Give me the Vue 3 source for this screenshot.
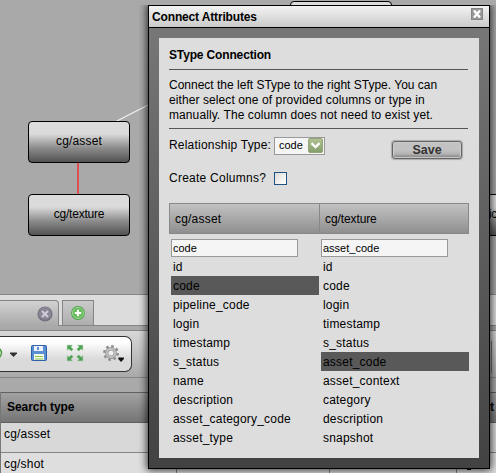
<script setup>
const description = [
  { text: 'Connect the left SType to the right SType. You can', cls: 'd1' },
  { text: 'either select one of provided columns or type in', cls: 'd2' },
  { text: 'manually. The column does not need to exist yet.', cls: 'd3' },
]
const columns = [
  {
    type: 'cg/asset',
    value: 'code',
    selected: 'code',
    items: ['id', 'code', 'pipeline_code', 'login', 'timestamp', 's_status', 'name', 'description', 'asset_category_code', 'asset_type'],
  },
  {
    type: 'cg/texture',
    value: 'asset_code',
    selected: 'asset_code',
    items: ['id', 'code', 'login', 'timestamp', 's_status', 'asset_code', 'asset_context', 'category', 'description', 'snapshot'],
  },
]
</script>

<template>
  <div class="screen">
    <section class="canvas">
      <svg class="links" width="496" height="294">
        <path d="M116 121.5L148 105" stroke="#f0f0f0" stroke-width="1.4" />
        <path d="M78 163V194" stroke="#dc5050" stroke-width="2" />
      </svg>
      <div class="node asset">cg/asset</div>
      <div class="node texture">cg/texture</div>
      <div class="node upper"></div>
      <div class="node side">ic</div>
    </section>

    <nav class="tabs">
      <div class="tab active">
        <svg width="16" height="16" viewBox="0 0 16 16">
          <circle cx="8" cy="8" r="7.6" fill="#77727f" />
          <circle cx="8" cy="7.4" r="6.3" fill="#8b8695" />
          <path d="M5 5l6 6M11 5l-6 6" stroke="#cfccd8" stroke-width="2.1" />
        </svg>
      </div>
      <div class="tab add">
        <svg width="14" height="14" viewBox="0 0 14 14">
          <circle cx="7" cy="7" r="6.9" fill="#4ba447" />
          <circle cx="7" cy="7" r="5.6" fill="#68bd5e" stroke="#b9e3b2" stroke-width=".7" />
          <path d="M7 3.8v6.4M3.8 7h6.4" stroke="#fff" stroke-width="2" />
        </svg>
      </div>
    </nav>
    <div class="strip"></div>

    <section class="toolbar">
      <div class="pill">
        <svg width="131" height="34" viewBox="0 0 131 34">
          <circle cx="-4" cy="16" r="5.4" fill="#fff" stroke="#4f9e43" stroke-width="1.6" />
          <path d="M10 15.5h7v1L13.5 20 10 16.5z" fill="#333" />
          <g>
            <rect x="31.5" y="8.5" width="15" height="15" rx="1" fill="#5b8fd4" stroke="#2f5fa8" />
            <path d="M34 9h9v5h-9z" fill="#eef4fd" />
            <path d="M37 10h2v3h-2z" fill="#5b8fd4" />
            <path d="M34 17h10v6H34z" fill="#f4faec" />
            <path d="M35 19.5h8M35 22h8" stroke="#8bc34a" stroke-width="1.2" />
          </g>
          <g fill="#4ca052" stroke="#79b878" stroke-width=".5">
            <path d="M67.3 8.3h5l-1.6 1.6 2.4 2.4-1.8 1.8-2.4-2.4-1.6 1.6z" />
            <path d="M82.7 8.3h-5l1.6 1.6-2.4 2.4 1.8 1.8 2.4-2.4 1.6 1.6z" />
            <path d="M67.3 23.7h5l-1.6-1.6 2.4-2.4-1.8-1.8-2.4 2.4-1.6-1.6z" />
            <path d="M82.7 23.7h-5l1.6-1.6-2.4-2.4 1.8-1.8 2.4 2.4 1.6-1.6z" />
          </g>
          <circle cx="111" cy="16" r="6.6" fill="none" stroke="#8d8d8d" stroke-width="2.6" stroke-dasharray="2.6 2.58" />
          <circle cx="111" cy="16" r="4.2" fill="#eee" stroke="#999" stroke-width="3.4" />
          <circle cx="111" cy="16" r="4.2" fill="none" stroke="#c4c4c4" stroke-width="1.8" />
          <path d="M118.3 20.5h5.6v1.5L121 25l-2.7-3z" fill="#111" />
        </svg>
      </div>
      <div class="shelf"></div>
    </section>

    <div class="gap"></div>
    <section class="table">
      <div class="thead"><b>Search type</b><b class="last">t</b></div>
      <div class="trow first"><span>cg/asset</span></div>
      <div class="trow second"><span>cg/shot</span><i class="v1"></i><i class="v2"></i><i class="v3"></i><i class="mark"></i></div>
    </section>

    <div class="popup">
      <header>
        <b>Connect Attributes</b>
        <svg width="12" height="12" viewBox="0 0 12 12">
          <rect x=".5" y=".5" width="11" height="11" fill="#999" stroke="#858585" />
          <path d="M3 2.5L9 9.5M9 2.5L3 9.5" stroke="#fff" stroke-width="2.4" />
        </svg>
      </header>
      <div class="body">
        <main class="panel">
          <h1><span>SType Connection</span></h1>
          <div class="desc">
            <p v-for="line in description" :key="line.cls" :class="line.cls">{{ line.text }}</p>
          </div>
          <div class="options">
            <div class="fields">
              <div class="field relation">
                <label>Relationship Type:</label>
                <div class="select">
                  <span>code</span>
                  <svg width="15" height="15" viewBox="0 0 15 15">
                    <defs>
                      <linearGradient id="arrow" x2="0" y2="1">
                        <stop offset="0" stop-color="#b3c294" />
                        <stop offset="1" stop-color="#839e68" />
                      </linearGradient>
                    </defs>
                    <rect x=".5" y=".5" width="14" height="14" rx="1.5" fill="url(#arrow)" stroke="#91a777" />
                    <path d="M3.5 5.2L7.5 9l4-3.8" fill="none" stroke="#fff" stroke-width="2.4" />
                  </svg>
                </div>
              </div>
              <div class="field create">
                <label>Create Columns?</label>
                <div class="check"></div>
              </div>
            </div>
            <div class="save">Save</div>
          </div>
          <div class="heads">
            <div v-for="c in columns" :key="c.type"><span>{{ c.type }}</span></div>
          </div>
          <div class="lists">
            <div v-for="c in columns" :key="c.type" class="list">
              <div class="input">{{ c.value }}</div>
              <div v-for="item in c.items" :key="item" class="item" :class="{ on: item === c.selected }">{{ item }}</div>
            </div>
          </div>
        </main>
      </div>
    </div>
  </div>
</template>

<style>
body { margin: 0; overflow: hidden; }
</style>

<style scoped>
* { box-sizing: border-box; }
.screen {
  position: relative; width: 496px; height: 473px; overflow: hidden;
  background: #a9a9a9; color: #000;
  font: 12px/15px "Liberation Sans", Arial, sans-serif;
  display: flex; flex-direction: column;
}
.canvas { position: relative; height: 294px; flex: none; }
.links { position: absolute; left: 0; top: 0; }
.node {
  position: absolute; width: 102px; height: 42px; border: 1px solid #000; border-radius: 4px;
  background: linear-gradient(#dcdcdc 0%, #dadada 30%, #8c8c8c 65%, #525252 100%);
  text-align: center; line-height: 38px; letter-spacing: .15px;
}
.asset { left: 28px; top: 121px; }
.texture { left: 28px; top: 194px; letter-spacing: -.2px; }
.upper { left: 290px; top: 1px; }
.side { left: 442px; top: 194px; letter-spacing: -.4px; }

.tabs {
  height: 32px; flex: none; display: flex; align-items: flex-end; gap: 3px;
  background: #dcdcdc; border-top: 1px solid #858585; border-bottom: 1px solid #858585;
}
.tab { height: 25px; border: 1px solid #858585; border-bottom: 0; display: flex; align-items: center; }
.active {
  width: 59px; height: 26px; margin-bottom: -1px; justify-content: flex-end; padding-right: 5px;
  border-left: 0; border-top-right-radius: 4px; background: linear-gradient(#d2d2d2, #a9a9a9);
}
.add { width: 32px; justify-content: center; background: linear-gradient(#cacaca, #aeaeae); }
.strip { height: 4px; flex: none; }
.toolbar {
  height: 48px; flex: none; display: flex; justify-content: space-between; align-items: flex-start;
  border-top: 1px solid #858585; border-bottom: 1px solid #858585;
  background: linear-gradient(#d8d8d8, #a9a9a9); padding-top: 5px;
}
.pill {
  width: 132px; height: 36px; border: 1px solid #333; border-left: 0; border-radius: 0 7px 7px 0;
  background: linear-gradient(#fff 15%, #dadada 65%); overflow: hidden;
}
.pill svg { display: block; }
.shelf { width: 5px; height: 32px; margin-top: 5px; border-left: 1px solid #777; }
.gap { height: 14px; flex: none; }
.table { flex: none; border-left: 1px solid #777; }
.thead {
  height: 31px; display: flex; justify-content: space-between; align-items: center; padding: 0 2px 0 6px;
  border-top: 1px solid #606060; border-bottom: 1px solid #606060;
  background: linear-gradient(#a2a2a2, #757575);
}
.thead b { letter-spacing: -.05px; }
.trow { position: relative; padding: 4px 3px; height: 30px; background: #d8d8d8; border-bottom: 1px solid #858585; letter-spacing: .2px; }
.second { background: #dedede; }
.trow i { position: absolute; top: 0; width: 1px; height: 30px; background: #858585; }
.v1 { left: 175px; } .v2 { left: 328px; } .v3 { left: 455px; }
.trow .mark { left: 466px; top: 15px; width: 4px; height: 2px; background: #000; }

.popup {
  position: absolute; left: 148px; top: 5px; width: 342px; height: 464px;
  border: 1px solid #000; background: #555; box-shadow: 0 0 8px 1px rgba(0, 0, 0, .8);
  display: flex; flex-direction: column; clip-path: inset(0 -12px -12px -10px);
}
header {
  height: 22px; flex: none; border-bottom: 1px solid #000; background: linear-gradient(#f3f3f3, #cacaca);
  display: flex; justify-content: space-between; padding: 2px 6px 0 3px;
}
header b { line-height: 18px; letter-spacing: -.15px; }
.body { flex: 1; padding: 10px; background: linear-gradient(#777, #424242); }
.panel { width: 320px; height: 420px; padding: 10px 10px 0; background: #ddd; }
h1 { margin: 0; height: 22px; width: 299px; border-bottom: 1px solid #555; font: bold 12px/15px "Liberation Sans", Arial, sans-serif; letter-spacing: -.15px; }
.desc { width: 299px; height: 59px; padding-top: 8px; border-bottom: 1px solid #555; white-space: nowrap; }
.desc p { margin: 0; }
.d1 { letter-spacing: 0; }
.d2 { letter-spacing: .09px; }
.d3 { letter-spacing: .09px; }
.options { height: 74px; display: flex; justify-content: space-between; padding: 7px 7px 0 0; }
.fields { display: flex; flex-direction: column; gap: 14px; }
.field { display: flex; height: 19px; align-items: center; }
.field label { width: 105px; white-space: nowrap; letter-spacing: .2px; }
.create label { letter-spacing: .25px; }
.select { width: 51px; height: 18px; border: 1px solid #999; background: #f5f5f5; display: flex; align-items: center; justify-content: space-between; padding: 0 1px 0 4px; font-size: 11px; }
.check { width: 13px; height: 13px; border: 1px solid #1d5281; background: linear-gradient(135deg, #dcdcd7, #fff); }
.save {
  width: 70px; height: 18px; margin-top: 5px; border: 1px solid #666; border-radius: 3px;
  background: linear-gradient(#c2c2c2 50%, #b3b3b3 75%, #777); box-shadow: 0 0 1px 1px #aaa, inset 0 0 1px 1px #ccc;
  text-align: center; font-weight: bold; font-size: 12.5px; line-height: 17px; color: #333;
}
.heads { display: flex; width: 300px; height: 31px; border: 1px solid #888; background: linear-gradient(#c2c2c2, #8f8f8f); letter-spacing: .2px; }
.heads div { width: 150px; padding-left: 5px; line-height: 30px; }
.heads div + div { border-left: 1px solid #888; letter-spacing: -.1px; }
.lists { display: flex; gap: 2px; padding: 5px 0 0 2px; }
.list { width: 148px; }
.input { width: 127px; height: 18px; border: 1px solid #999; background: #f5f5f5; padding-left: 1px; line-height: 16px; font-size: 11px; }
.item { height: 19px; padding-left: 2px; line-height: 20px; letter-spacing: .2px; white-space: nowrap; }
.item.on { background: #595959; }
</style>
